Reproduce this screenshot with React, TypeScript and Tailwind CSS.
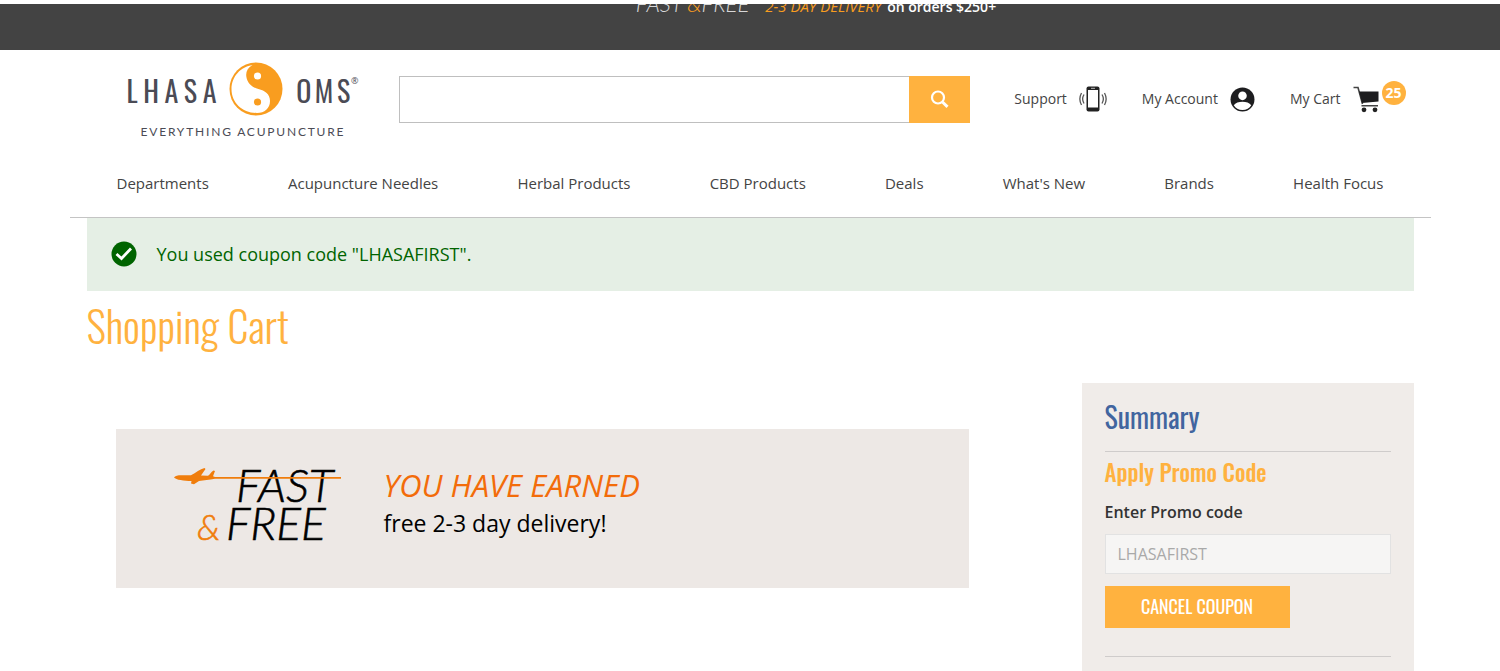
import React from 'react'

const navItems = [
  'Departments',
  'Acupuncture Needles',
  'Herbal Products',
  'CBD Products',
  'Deals',
  "What's New",
  'Brands',
  'Health Focus'
]

const displayFont = "font-['Oswald','Liberation_Sans_Narrow',sans-serif]"

function YinYang() {
  return (
    <svg width="54" height="54" viewBox="0 0 54 54" aria-hidden="true">
      <circle cx="27" cy="27" r="26.5" fill="#f99d1f" />
      <path
        d="M23.500 3C18.500 6 16.500 10 17.400 15c1 6.500 6 10.500 12 12 6.500 1.600 11.600 5 11.600 12 0 7.500-5.500 12-13 12C13.500 51 2.500 41 2.500 27 2.500 14.500 12 4.500 23.500 3z"
        fill="#fff"
      />
      <circle cx="28.500" cy="14" r="3.600" fill="#fff" />
      <circle cx="28.500" cy="40" r="3.600" fill="#f99d1f" />
    </svg>
  )
}

function Logo() {
  return (
    <a href="#" aria-label="Lhasa OMS, everything acupuncture" className="block w-[232px] text-[#4b4b55]">
      <div className="flex h-[54px] items-center justify-between pt-1 text-[28px] leading-8">
        <span className={`${displayFont} flex w-[90px] justify-between`}>
          {'LHASA'.split('').map((c, i) => <span key={i}>{c}</span>)}
        </span>
        <span className="-mt-1">
          <YinYang />
        </span>
        <span className={`${displayFont} flex w-[54px] justify-between`}>
          {'OMS'.split('').map((c, i) => <span key={i}>{c}</span>)}
        </span>
        <sup className="-mt-3 -ml-3 font-['Open_Sans',sans-serif] text-[9px]">®</sup>
      </div>
      <div className="mt-1 pl-3.5 font-['Lato',sans-serif] text-xs leading-6 tracking-[0.15em]">EVERYTHING ACUPUNCTURE</div>
    </a>
  )
}

function SearchIcon() {
  return (
    <svg width="20" height="20" viewBox="0 0 20 20" fill="none" stroke="#fff" aria-hidden="true">
      <circle cx="8" cy="7.500" r="6" strokeWidth="2.200" />
      <path d="M12.500 12l5 4.800" strokeWidth="3" />
    </svg>
  )
}

function PhoneIcon() {
  return (
    <svg width="28" height="28" viewBox="0 0 28 28" fill="none" aria-hidden="true">
      <rect x="7.500" y="1.500" width="13" height="25" rx="2" fill="#222" />
      <rect x="9" y="5" width="10" height="17.500" fill="#fff" />
      <path d="M12 3.300h4" stroke="#bbb" />
      <path d="M5 9.500c-1.800 3-1.800 6 0 9M2.500 8c-2.200 4-2.200 8 0 12M23 9.500c1.800 3 1.800 6 0 9M25.500 8c2.200 4 2.200 8 0 12" stroke="#555" strokeWidth="1.300" />
    </svg>
  )
}

function AccountIcon() {
  return (
    <svg width="25" height="25" viewBox="0 0 24 24" aria-hidden="true">
      <circle cx="12" cy="12" r="11.500" fill="#1d1d1f" />
      <circle cx="12" cy="8.500" r="4.100" fill="#fff" />
      <path d="M3.600 17.400c1.500-2.300 5-3.300 8.400-3.300s6.900 1 8.400 3.300C18.800 20.500 15.700 22 12 22s-6.800-1.500-8.400-4.600z" fill="#fff" />
    </svg>
  )
}

function CartIcon() {
  return (
    <svg width="27" height="27" viewBox="0 0 27 27" aria-hidden="true">
      <path d="M.5 1.500h4.500l4.500 16.500M8.500 19.800h16.500" fill="none" stroke="#444" strokeWidth="1.600" />
      <path d="M6 5.500h19.500v10L9 17z" fill="#1d1d1f" />
      <circle cx="11" cy="23.800" r="2.400" fill="#222" />
      <circle cx="22" cy="23.800" r="2.400" fill="#222" />
    </svg>
  )
}

function FastFreeArt() {
  return (
    <svg width="170" height="80" viewBox="0 0 170 80" className="font-['Lato',sans-serif]" role="img" aria-label="Fast & free">
      <g fontStyle="italic" fontWeight="300" strokeWidth="0.6">
        <text x="62" y="35" fontSize="46" fill="#000" stroke="#000">FAST</text>
        <text x="23" y="73" fontSize="36" fill="#f07d0c" stroke="#f07d0c">&amp;</text>
        <text x="52" y="73" fontSize="46" fill="#000" stroke="#000">FREE</text>
      </g>
      <path
        d="M0 10.500c1-2 5-2.500 9-2.300l8 .1c5-2.600 9-6.300 13.500-7.300l1 1-4.500 6.500 7 .2c2-1 3-4 5.500-5.200l1.500.4-2 5.300 2 .8h126v1.700H41c-6 1-11 1.700-16 2.200l-5 3.300-3-.6.5-2.500C10 13.800 2 13 0 10.500z"
        fill="#f07d0c"
      />
    </svg>
  )
}

function CheckIcon() {
  return (
    <svg width="26" height="26" viewBox="0 0 26 26" aria-hidden="true">
      <circle cx="13" cy="13" r="12.500" fill="#006400" />
      <path d="M5.500 13l5 4.500L20 7.500" fill="none" stroke="#fff" strokeWidth="2.800" />
    </svg>
  )
}

function Header() {
  return (
    <header className="mx-auto w-full max-w-[1361px] border-b border-[#c4c4c4] text-[#444]">
      <div className="flex items-start pt-3 pr-[25px] pl-[57px]">
        <Logo />
        <form className="mt-3.5 ml-10 flex h-[47px] flex-1" onSubmit={(e) => e.preventDefault()}>
          <input
            type="text"
            aria-label="Search products"
            className="min-w-0 flex-1 border border-r-0 border-[#bfbfbf] px-4 outline-none"
          />
          <button type="submit" aria-label="Search" className="flex w-[61px] items-center justify-center bg-[#ffb23f]">
            <SearchIcon />
          </button>
        </form>
        <div className="mt-[21px] ml-11 flex items-center gap-[35px] text-sm leading-8">
          <a href="#" className="flex h-8 items-center gap-3">Support <PhoneIcon /></a>
          <a href="#" className="flex h-8 items-center gap-3">My Account <AccountIcon /></a>
          <a href="#" className="relative flex h-8 items-center gap-3 pr-[26px]">
            My Cart <CartIcon />
            <span className="absolute -top-0.5 right-0 flex size-6 items-center justify-center rounded-full bg-[#ffb23f] text-sm font-bold text-white">25</span>
          </a>
        </div>
      </div>
      <nav className="flex justify-between px-[47px] pt-[27px] pb-[22px] text-[15px] leading-6">
        {navItems.map((item) => (
          <a key={item} href="#">{item}</a>
        ))}
      </nav>
    </header>
  )
}

function Summary() {
  return (
    <aside className="w-[332px] shrink-0 bg-[#f0ece9] px-[23px] pt-4">
      <h2 className={`${displayFont} pb-4 text-[28px] leading-9 text-[#41659f]`}>Summary</h2>
      <div className="border-y border-[#cfcccb] pt-0.5 pb-7">
        <h3 className={`${displayFont} text-[23px] leading-9 font-medium text-[#ffb23f]`}>Apply Promo Code</h3>
        <label htmlFor="promo" className="mt-2.5 block text-base leading-6 font-semibold text-[#333]">Enter Promo code</label>
        <input
          id="promo"
          type="text"
          defaultValue="LHASAFIRST"
          disabled
          className="mt-2.5 block h-10 w-full border border-[#e2e2e2] bg-[#f6f5f4] px-3 text-base text-[#a9a9a9]"
        />
        <button type="button" className={`${displayFont} mt-3 flex h-[42px] w-[185px] justify-center bg-[#ffb23f] text-lg leading-10 text-white`}>
          CANCEL COUPON
        </button>
      </div>
    </aside>
  )
}

export default function App() {
  return (
    <div className="flex min-h-screen flex-col bg-white font-['Open_Sans','Noto_Sans',sans-serif]">
      {/* Promo strip */}
      <div className="mt-1 h-[46px] overflow-hidden bg-[#434343]">
        <div className="-mt-2.5 flex items-baseline justify-center gap-4 pl-[132px] leading-5">
          <span className="font-['Lato',sans-serif] text-[22px] font-light text-[#d8d8d8] italic">
            FAST <span className="text-[#f99d1f]">&amp;</span>FREE
          </span>
          <span className="text-sm font-semibold text-white">
            <span className="mr-0.5 text-[15px] font-normal text-[#f99d1f] italic">2-3 DAY DELIVERY</span> on orders $250+
          </span>
        </div>
      </div>

      <Header />

      <main className="mx-auto flex w-full max-w-[1361px] flex-1 flex-col px-[17px]">
        {/* Coupon message */}
        <div role="status" className="flex h-[73px] shrink-0 items-center gap-5 bg-[#e5efe5] px-6 pb-0.5 text-lg text-[#006400]">
          <CheckIcon />
          You used coupon code "LHASAFIRST".
        </div>

        <h1 className={`${displayFont} pt-1 text-[42px] leading-[60px] font-light text-[#ffb23f]`}>Shopping Cart</h1>

        <div className="mt-7 flex flex-1">
          <section className="flex-1 pt-[46px] pr-[113px] pl-[29px]">
            <div className="flex h-[159px] items-center gap-10 bg-[#ede8e5] pb-1 pl-[58px]">
              <FastFreeArt />
              <div className="pb-2">
                <p className="text-[31px] leading-10 text-[#f36c0a] italic">YOU HAVE EARNED</p>
                <p className="text-[23px] leading-9 text-black">free 2-3 day delivery!</p>
              </div>
            </div>
          </section>
          <Summary />
        </div>
      </main>
    </div>
  )
}
